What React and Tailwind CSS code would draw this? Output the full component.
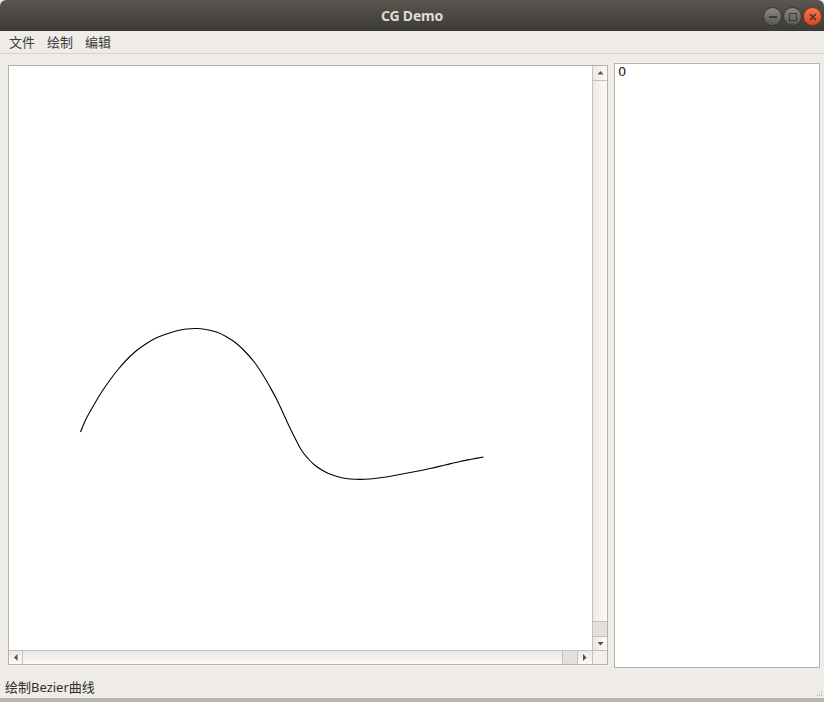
import React from "react";

const pts = [
  [80.5, 432], [86, 419], [93, 406.5], [101, 393], [110, 380], [118, 369.5], [126.5, 360], [136, 351], [146.5, 343.5], [156, 338], [166.5, 334], [176, 331], [186.5, 329], [196, 328.5], [206, 329.5], [216.5, 332], [226, 336.5], [236.5, 343.5], [246, 352.5], [255, 363], [263, 375], [270, 387], [277, 400], [284, 415], [290, 428], [296.5, 441], [302, 451], [308, 458.5], [314, 464.5], [321, 469.5], [328.5, 473.5], [337, 476.5], [346, 478.5], [355, 479.3], [365, 479.3], [375, 478.5], [386, 477], [397, 475], [413, 472], [430, 468.5], [445, 465], [460, 461.5], [471, 459.3], [483.5, 457]
];

function catmull(points) {
  let d = `M${points[0][0]},${points[0][1]}`;
  for (let i = 0; i < points.length - 1; i++) {
    const p0 = points[i - 1] || points[i];
    const p1 = points[i];
    const p2 = points[i + 1];
    const p3 = points[i + 2] || p2;
    const c1x = p1[0] + (p2[0] - p0[0]) / 6;
    const c1y = p1[1] + (p2[1] - p0[1]) / 6;
    const c2x = p2[0] - (p3[0] - p1[0]) / 6;
    const c2y = p2[1] - (p3[1] - p1[1]) / 6;
    d += ` C${c1x.toFixed(2)},${c1y.toFixed(2)} ${c2x.toFixed(2)},${c2y.toFixed(2)} ${p2[0]},${p2[1]}`;
  }
  return d;
}

function Tri({ dir }) {
  const paths = {
    up: "M0.5,4.5 L3.5,1 L6.5,4.5 Z",
    down: "M0.5,1 L3.5,4.5 L6.5,1 Z",
    left: "M4.5,0 L1,3.5 L4.5,7 Z",
    right: "M1,0 L4.5,3.5 L1,7 Z",
  };
  const vertical = dir === "up" || dir === "down";
  return (
    <svg width={vertical ? 7 : 6} height={vertical ? 6 : 7} viewBox={vertical ? "0 0 7 6" : "0 0 6 7"}>
      <path d={paths[dir]} fill="#505050" />
    </svg>
  );
}

export default function App() {
  const font = { fontFamily: '"Noto Sans", "Noto Sans CJK SC", sans-serif' };
  return (
    <div className="w-[824px] h-[702px] bg-[#efebe7] flex flex-col overflow-hidden" style={font}>
      {/* Title bar */}
      <div className="h-[31px] shrink-0 relative flex items-center justify-center bg-gradient-to-b from-[#5a5650] to-[#3d3b37] rounded-t-[6px]">
        <span className="text-[14px] font-bold text-[#dfdbd2] tracking-[-0.2px]">CG Demo</span>
        <div className="absolute right-[2px] top-[7px] flex gap-[1px]">
          <div className="w-[19px] h-[19px] rounded-full bg-gradient-to-b from-[#8a8882] to-[#5a5853] border border-[#3a3935] flex items-center justify-center">
            <div className="w-[8px] h-[2px] bg-[#3c3b37]" />
          </div>
          <div className="w-[19px] h-[19px] rounded-full bg-gradient-to-b from-[#8a8882] to-[#5a5853] border border-[#3a3935] flex items-center justify-center">
            <div className="w-[8px] h-[8px] border-[1.5px] border-[#3c3b37]" />
          </div>
          <div className="w-[19px] h-[19px] rounded-full bg-gradient-to-b from-[#f47a4a] to-[#d9461d] border border-[#8a3416] flex items-center justify-center">
            <svg width="8" height="8" viewBox="0 0 8 8">
              <path d="M1,1 L7,7 M7,1 L1,7" stroke="#3c3b37" strokeWidth="1.6" />
            </svg>
          </div>
        </div>
      </div>

      {/* Menu bar */}
      <div className="h-[23px] shrink-0 flex items-center pl-[9px] gap-[12px] text-[13px] text-[#3c3c3c] border-b border-[#d8d4cf]" style={{ fontFamily: '"Noto Sans CJK SC", sans-serif' }}>
        <span className="w-[26px]">文件</span>
        <span className="w-[26px]">绘制</span>
        <span className="w-[26px]">编辑</span>
      </div>

      {/* Main area */}
      <div className="flex flex-1 min-h-0 pl-[8px] pt-[9px] gap-[6px]">
        {/* Canvas with scrollbars */}
        <div className="mt-[2px] w-[600px] h-[600px] border border-[#b5b1ab] flex flex-col bg-white">
          <div className="flex h-[584px]">
            <div className="w-[584px] h-[584px] bg-white relative overflow-hidden">
              <svg width="584" height="584" viewBox="9 66 584 584" className="block">
                <path d={catmull(pts)} fill="none" stroke="#000" strokeWidth="1.1" />
              </svg>
            </div>
            <div className="w-[15px] border-l border-[#c4c0ba] flex flex-col bg-gradient-to-r from-[#ece9e5] to-[#fbfaf9]">
              <div className="h-[15px] border-b border-[#c4c0ba] flex items-center justify-center">
                <Tri dir="up" />
              </div>
              <div className="flex-1" />
              <div className="h-[15px] bg-[#e4e1dd] border-t border-[#c4c0ba]" />
              <div className="h-[14px] border-t border-[#c4c0ba] flex items-center justify-center">
                <Tri dir="down" />
              </div>
            </div>
          </div>
          <div className="flex h-[14px] border-t border-[#c4c0ba] box-content">
            <div className="w-[584px] flex bg-gradient-to-b from-[#ece9e5] to-[#fbfaf9]">
              <div className="w-[14px] border-r border-[#c4c0ba] flex items-center justify-center">
                <Tri dir="left" />
              </div>
              <div className="flex-1" />
              <div className="w-[15px] bg-[#e4e1dd] border-l border-[#c4c0ba]" />
              <div className="w-[15px] border-l border-[#c4c0ba] flex items-center justify-center">
                <Tri dir="right" />
              </div>
            </div>
            <div className="w-[15px] border-l border-[#c4c0ba] bg-[#f2efec]" />
          </div>
        </div>

        {/* Right panel */}
        <div className="w-[206px] h-[605px] border border-[#b5b1ab] bg-white pl-[3px] pt-[0px] text-[13px] leading-[16px] text-[#1a1a1a]" style={{ fontFamily: '"DejaVu Sans", sans-serif' }}>
          <span>0</span>
        </div>
      </div>

      {/* Status bar */}
      <div className="h-[29px] shrink-0 flex items-center pl-[5px] pt-[9px] text-[13px] text-[#2e2e2e] relative" style={{ fontFamily: '"Noto Sans", "Noto Sans CJK SC", sans-serif' }}>
        <span>绘制Bezier曲线</span>
        <div className="absolute right-[2px] bottom-[2px] grid grid-cols-3 gap-[1px]">
          <div className="w-[1px] h-[1px]" />
          <div className="w-[1px] h-[1px]" />
          <div className="w-[1px] h-[1px] bg-[#b0aca6]" />
          <div className="w-[1px] h-[1px]" />
          <div className="w-[1px] h-[1px] bg-[#b0aca6]" />
          <div className="w-[1px] h-[1px] bg-[#b0aca6]" />
          <div className="w-[1px] h-[1px] bg-[#b0aca6]" />
          <div className="w-[1px] h-[1px] bg-[#b0aca6]" />
          <div className="w-[1px] h-[1px] bg-[#b0aca6]" />
        </div>
      </div>
      <div className="h-[4px] shrink-0 bg-[#b9b6b0]" />
    </div>
  );
}
